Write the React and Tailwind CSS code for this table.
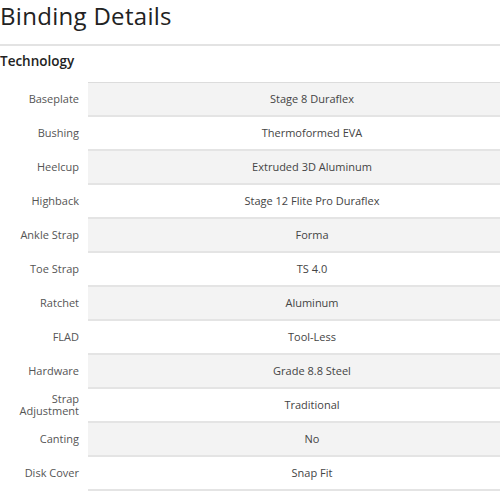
export default function App() {
  const rows = [
    ["Baseplate", "Stage 8 Duraflex"],
    ["Bushing", "Thermoformed EVA"],
    ["Heelcup", "Extruded 3D Aluminum"],
    ["Highback", "Stage 12 Flite Pro Duraflex"],
    ["Ankle Strap", "Forma"],
    ["Toe Strap", "TS 4.0"],
    ["Ratchet", "Aluminum"],
    ["FLAD", "Tool-Less"],
    ["Hardware", "Grade 8.8 Steel"],
    ["Strap Adjustment", "Traditional"],
    ["Canting", "No"],
    ["Disk Cover", "Snap Fit"],
  ];
  return (
    <div className="w-[500px] h-[500px] bg-white overflow-hidden" style={{ fontFamily: '"Open Sans", "Liberation Sans", sans-serif' }}>
      <h1 className="text-[24px] leading-[32px] h-[44px] text-[#222] font-normal tracking-[0.3px]">Binding Details</h1>
      <div className="border-t-2 border-[#e3e3e3]">
        <h2 className="text-[13.5px] font-semibold text-[#222] h-[36px] pt-[5px] leading-[20px]">Technology</h2>
        <div className="border-b border-[#dcdcdc] ml-[88px]" />
        {rows.map(([k, v], i) => (
          <div key={k} className="flex h-[34px]">
            <div className="w-[88px] flex items-center justify-end pr-[9px] text-right text-[11px] leading-[12px] text-[#555] border-b-2 border-transparent">
              {k === "Strap Adjustment" ? (
                <div className="flex flex-col items-end"><span>Strap</span><span>Adjustment</span></div>
              ) : k}
            </div>
            <div className={`flex-1 flex items-center justify-center pl-[36px] border-b-2 border-[#e4e4e4] text-[11px] text-[#444] ${i % 2 === 0 ? "bg-[#f3f3f3]" : "bg-white"}`}>
              {v}
            </div>
          </div>
        ))}
      </div>
    </div>
  );
}
